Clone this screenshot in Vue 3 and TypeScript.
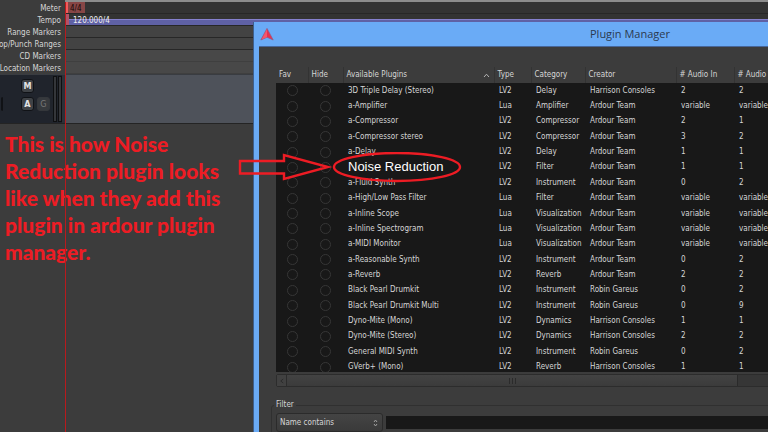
<script setup lang="ts">
import { ref } from 'vue'

interface Plugin {
  name: string
  type: string
  category: string
  creator: string
  audioIn: string
  audioOut: string
  highlight?: boolean
}

const row = (
  name: string,
  type: string,
  category: string,
  creator: string,
  audioIn: string,
  audioOut: string,
  highlight = false,
): Plugin => ({ name, type, category, creator, audioIn, audioOut, highlight })

const plugins: Plugin[] = [
  row('3D Triple Delay (Stereo)', 'LV2', 'Delay', 'Harrison Consoles', '2', '2'),
  row('a-Amplifier', 'Lua', 'Amplifier', 'Ardour Team', 'variable', 'variable'),
  row('a-Compressor', 'LV2', 'Compressor', 'Ardour Team', '2', '1'),
  row('a-Compressor stereo', 'LV2', 'Compressor', 'Ardour Team', '3', '2'),
  row('a-Delay', 'LV2', 'Delay', 'Ardour Team', '1', '1'),
  row('Noise Reduction', 'LV2', 'Filter', 'Ardour Team', '1', '1', true),
  row('a-Fluid Synth', 'LV2', 'Instrument', 'Ardour Team', '0', '2'),
  row('a-High/Low Pass Filter', 'Lua', 'Filter', 'Ardour Team', 'variable', 'variable'),
  row('a-Inline Scope', 'Lua', 'Visualization', 'Ardour Team', 'variable', 'variable'),
  row('a-Inline Spectrogram', 'Lua', 'Visualization', 'Ardour Team', 'variable', 'variable'),
  row('a-MIDI Monitor', 'Lua', 'Visualization', 'Ardour Team', 'variable', 'variable'),
  row('a-Reasonable Synth', 'LV2', 'Instrument', 'Ardour Team', '0', '2'),
  row('a-Reverb', 'LV2', 'Reverb', 'Ardour Team', '2', '2'),
  row('Black Pearl Drumkit', 'LV2', 'Instrument', 'Robin Gareus', '0', '2'),
  row('Black Pearl Drumkit Multi', 'LV2', 'Instrument', 'Robin Gareus', '0', '9'),
  row('Dyno-Mite (Mono)', 'LV2', 'Dynamics', 'Harrison Consoles', '1', '1'),
  row('Dyno-Mite (Stereo)', 'LV2', 'Dynamics', 'Harrison Consoles', '2', '2'),
  row('General MIDI Synth', 'LV2', 'Instrument', 'Robin Gareus', '0', '2'),
  row('GVerb+ (Mono)', 'LV2', 'Reverb', 'Harrison Consoles', '1', '1'),
]

const rulers = [
  { id: 'meter', label: 'Meter' },
  { id: 'tempo', label: 'Tempo' },
  { id: 'range', label: 'Range Markers' },
  { id: 'loop', label: 'Loop/Punch Ranges' },
  { id: 'cd', label: 'CD Markers' },
  { id: 'location', label: 'Location Markers' },
]

const note = [
  'This is how Noise',
  'Reduction plugin looks',
  'like when they add this',
  'plugin in ardour plugin',
  'manager.',
]

const filterMode = ref('Name contains')
const filterText = ref('')
</script>

<template>
  <main class="desktop">
    <section class="editor">
      <div class="rulers">
        <div v-for="r in rulers" :key="r.id" class="ruler" :class="r.id">
          <span class="ruler-label">{{ r.label }}</span>
          <div class="ruler-lane">
            <span v-if="r.id === 'meter'" class="meter-mark">4/4</span>
            <span v-if="r.id === 'tempo'" class="tempo-mark">120.000/4</span>
          </div>
        </div>
      </div>
      <div class="track">
        <div class="track-head">
          <div class="track-buttons">
            <button type="button" class="key wide">M</button>
            <button type="button" class="key edge" aria-label="Playlist"></button>
            <button type="button" class="key">A</button>
            <button type="button" class="key dim">G</button>
          </div>
          <div class="level"><i></i><i></i></div>
        </div>
        <div class="track-lane"></div>
      </div>
      <p class="note"><span v-for="line in note" :key="line">{{ line }}</span></p>
      <div class="playhead"></div>
    </section>

    <section class="dialog" aria-labelledby="dialog-title">
      <header class="titlebar">
        <svg class="logo" viewBox="0 0 14 13" aria-hidden="true">
          <path d="M7 0.4 L13.2 12 L7 9.2 L0.8 12 Z" fill="#e8304e" stroke="#8d5a86" stroke-width=".7" />
          <path d="M7 1 L7 9.2 L1.6 11.4 Z" fill="#f5566c" />
        </svg>
        <h1 id="dialog-title">Plugin Manager</h1>
      </header>
      <div class="content">
        <div class="list">
          <table>
            <colgroup>
              <col class="c-fav" /><col class="c-hide" /><col class="c-name" /><col class="c-type" />
              <col class="c-cat" /><col class="c-creator" /><col class="c-in" /><col />
            </colgroup>
            <thead>
              <tr>
                <th>Fav</th>
                <th>Hide</th>
                <th>
                  <div class="sorted">
                    Available Plugins
                    <svg viewBox="0 0 7 5" aria-hidden="true"><path d="M1 4 L3.5 1.2 L6 4" /></svg>
                  </div>
                </th>
                <th>Type</th>
                <th>Category</th>
                <th>Creator</th>
                <th># Audio In</th>
                <th># Audio Out</th>
              </tr>
            </thead>
            <tbody>
              <tr v-for="p in plugins" :key="p.name">
                <td class="pick"><input type="radio" :aria-label="'Favorite ' + p.name" /></td>
                <td class="pick"><input type="radio" :aria-label="'Hide ' + p.name" /></td>
                <td><span :class="{ highlight: p.highlight }">{{ p.name }}</span></td>
                <td>{{ p.type }}</td>
                <td>{{ p.category }}</td>
                <td>{{ p.creator }}</td>
                <td>{{ p.audioIn }}</td>
                <td>{{ p.audioOut }}</td>
              </tr>
            </tbody>
          </table>
        </div>
        <div class="scrollbar">
          <button type="button" class="scroll-step" aria-label="Scroll left">
            <svg viewBox="0 0 5 7" aria-hidden="true"><path d="M4 1 L1 3.5 L4 6" /></svg>
          </button>
          <div class="thumb"><i></i><i></i><i></i></div>
        </div>
        <fieldset>
          <legend>Filter</legend>
          <div class="filter">
            <div class="combo">
              <select v-model="filterMode" aria-label="Filter mode">
                <option>Name contains</option>
                <option>Type contains</option>
                <option>Category contains</option>
              </select>
              <svg viewBox="0 0 5 8" aria-hidden="true"><path d="M1 3 L2.5 1 L4 3 M1 5 L2.5 7 L4 5" /></svg>
            </div>
            <input v-model="filterText" type="text" aria-label="Filter text" />
          </div>
        </fieldset>
      </div>
    </section>

    <svg class="callout" viewBox="0 0 226 32" aria-hidden="true">
      <path d="M2 9 H46 V3 L90 15 L46 27 V21.500 H2 Z" />
      <ellipse cx="159" cy="15" rx="63" ry="14" />
    </svg>
  </main>
</template>

<style>
body {
  background: #3c3c3c;
}
</style>

<style scoped>
.desktop {
  position: relative;
  height: 100vh;
  overflow: hidden;
  background: #3c3c3c;
  color: #d6d6d6;
  font-family: "DejaVu Sans Condensed", "Noto Sans", sans-serif;
  font-size: 8px;
  line-height: 12px;
}

button,
select,
input {
  margin: 0;
  padding: 0;
  font: inherit;
  color: inherit;
}

/* Editor */
.editor {
  position: relative;
  height: 100%;
}

.rulers {
  padding-top: 2px;
  background: linear-gradient(#8c8c8c, #8c8c8c) 65px 0 / 100% 2px no-repeat;
}

.ruler {
  display: grid;
  grid-template-columns: 65px 1fr;
  height: 12px;
  line-height: 14px;
}

.ruler-label {
  display: flex;
  justify-content: flex-end;
  padding-right: 4px;
  white-space: nowrap;
}

.ruler-lane {
  display: flex;
  height: 11px;
  border-bottom: 1px solid #272727;
  background: #434343;
}

.meter .ruler-lane,
.tempo .ruler-lane {
  background: #333;
}

.cd .ruler-lane,
.location .ruler-lane {
  background: #484848;
  border-bottom-color: #3f3f3f;
}

.tempo .ruler-lane {
  background: linear-gradient(#333 0 5px, #8580ce 5px 6px, #5f61a5 6px);
}

.meter-mark {
  width: 15px;
  padding-left: 2px;
  background: #874646;
  border-left: 3px solid #f25c5c;
  color: #160808;
}

.tempo-mark {
  padding-left: 4px;
  border-left: 4px solid #b25368;
  color: #eee;
}

.track {
  display: grid;
  grid-template-columns: 65px 1fr;
  height: 48px;
  border-top: 1px solid #393c41;
  border-bottom: 1px solid #242424;
}

.track-head {
  display: flex;
  justify-content: space-between;
  background: #20242c;
  border-right: 3px solid #2c3038;
}

.track-lane {
  background: #4e525a;
}

.track-buttons {
  display: grid;
  grid-template-columns: 17px 13px 13px;
  grid-auto-rows: 14px;
  gap: 4px 3px;
  padding-top: 4px;
  padding-left: 1px;
}

.key {
  border: 1px solid #101216;
  border-radius: 3px;
  background: #3f4246;
  color: #e4e4e4;
  font-weight: 700;
  font-size: 9px;
  line-height: 12px;
}

.key.wide {
  grid-column: 2;
}

.key.edge {
  grid-column: 1;
  width: 2px;
  border-width: 0 2px 0 0;
}

.key.dim {
  border-color: #34373b;
  background: #36393d;
  color: #777;
  font-weight: 400;
}

.level {
  display: flex;
  gap: 1px;
  padding: 1px 0;
}

.level i {
  width: 2px;
  border: 1px solid #0e0f11;
  background: #34363a;
}

.note {
  display: flex;
  flex-direction: column;
  margin: 0;
  padding: 6px 0 0 5px;
  color: #ed1c24;
  font-family: Lato, sans-serif;
  font-weight: 900;
  font-size: 21px;
  line-height: 27px;
}

.playhead {
  position: absolute;
  top: 2px;
  bottom: 0;
  left: 65px;
  width: 1px;
  background: #b81a1d;
}

/* Plugin manager window, running off the right side of the desktop */
.dialog {
  position: absolute;
  top: 22px;
  right: -238px;
  bottom: -60px;
  left: 253px;
  display: flex;
  flex-direction: column;
  padding: 0 5px;
  border-left: 1px solid #3e5f8c;
  background: #6aabf6;
}

.titlebar {
  display: grid;
  grid-template-columns: 14px 1fr 14px;
  align-items: center;
  height: 24px;
  padding: 0 1px;
}

.logo {
  width: 14px;
  height: 13px;
}

h1 {
  margin: 0;
  color: #2b3a50;
  font-family: "Open Sans", sans-serif;
  font-weight: 400;
  font-size: 11px;
  line-height: 24px;
  text-align: center;
}

.content {
  flex: 1;
  padding: 20px 12px;
  border-top: 1px solid #46669a;
  background: #3c3c3c;
}

.list {
  height: 305px;
  overflow: hidden;
  margin-left: 5px;
}

table {
  width: 100%;
  height: 308px;
  table-layout: fixed;
  border-collapse: collapse;
}

.c-fav { width: 32px; }
.c-hide { width: 35px; }
.c-name { width: 151px; }
.c-type { width: 37px; }
.c-cat { width: 54px; }
.c-creator { width: 91px; }
.c-in { width: 58px; }

thead tr {
  height: 16px;
}

th {
  padding: 0 3px;
  border-right: 1px solid #333;
  font-weight: 400;
  text-align: left;
  white-space: nowrap;
}

.sorted {
  display: flex;
  align-items: center;
  justify-content: space-between;
}

.sorted svg {
  width: 7px;
  height: 5px;
  margin-right: 1px;
}

.sorted path {
  fill: none;
  stroke: #b5b5b5;
}

tbody {
  background: #181818;
}

td {
  padding: 0 0 0 5px;
  white-space: nowrap;
}

.pick {
  padding: 0;
  line-height: 0;
}

.pick input {
  display: block;
  appearance: none;
  width: 11px;
  height: 11px;
  margin: 0 auto;
  border: 1px solid #363636;
  border-radius: 50%;
}

.highlight {
  display: block;
  color: #fff;
  font-family: "Liberation Sans", sans-serif;
  font-size: 13px;
}

.scrollbar {
  display: flex;
  height: 11px;
  margin: 2px 0 0 5px;
  border: 1px solid #2c2c2c;
  border-radius: 2px;
  background: #363636;
}

.scroll-step {
  width: 10px;
  border: 0;
  border-right: 1px solid #2c2c2c;
  background: #414141;
  line-height: 0;
}

.scroll-step svg {
  width: 4px;
  height: 6px;
}

.scroll-step path {
  fill: none;
  stroke: #262626;
}

.thumb {
  display: flex;
  align-items: center;
  justify-content: center;
  gap: 2px;
  width: 450px;
  border-right: 1px solid #2a2a2a;
  background: linear-gradient(#434343, #3b3b3b);
}

.thumb i {
  width: 1px;
  height: 6px;
  background: #2b2b2b;
}

fieldset {
  height: 60px;
  margin: 12px 0 0;
  padding: 2px 4px;
  border: 1px solid #303030;
  border-radius: 3px;
}

legend {
  margin-left: -2px;
  padding: 0 2px;
}

.filter {
  display: flex;
  align-items: center;
  gap: 3px;
}

.combo {
  display: grid;
  grid-template-columns: 1fr 14px;
  align-items: center;
  width: 105px;
  height: 17px;
  border: 1px solid #2b2b2b;
  border-radius: 3px;
  background: linear-gradient(#444, #3a3a3a);
}

.combo select {
  grid-area: 1 / 1 / 2 / 3;
  appearance: none;
  height: 17px;
  padding-left: 3px;
  border: 0;
  background: transparent;
}

.combo svg {
  grid-area: 1 / 2;
  width: 5px;
  height: 8px;
  justify-self: center;
  pointer-events: none;
}

.combo path {
  fill: none;
  stroke: #a0a0a0;
}

.filter > input {
  flex: 1;
  min-width: 0;
  height: 13px;
  border: 0;
  background: #181818;
}

/* Hand-drawn arrow and ring over both windows */
.callout {
  position: absolute;
  top: 152px;
  left: 238px;
  width: 226px;
  height: 32px;
}

.callout path,
.callout ellipse {
  fill: none;
  stroke: #ed1c24;
  stroke-width: 2.4;
}
</style>
